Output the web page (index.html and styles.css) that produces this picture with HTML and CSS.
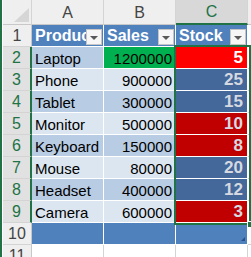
FILE: index.html
```html
<!DOCTYPE html>
<html lang="en">
<head>
<meta charset="utf-8">
<title>Inventory</title>
<link rel="stylesheet" href="styles.css">
</head>
<body>
<div class="window">
  <div class="sheet">
    <!-- column headers -->
    <div class="corner"><span class="select-all"></span></div>
    <div class="colhdr">A</div>
    <div class="colhdr">B</div>
    <div class="colhdr sel">C</div>
    <div class="colhdr last"></div>

    <!-- row 1: table header -->
    <div class="rowhdr">1</div>
    <div class="th"><span class="label">Product</span><span class="filter"></span></div>
    <div class="th"><span class="label">Sales</span><span class="filter"></span></div>
    <div class="th"><span class="label">Stock</span><span class="filter"></span></div>
    <div class="blank"></div>

    <div class="rowhdr sel">2</div>
    <div class="td odd">Laptop</div>
    <div class="td num good">1200000</div>
    <div class="td stock red">5</div>
    <div class="blank"></div>

    <div class="rowhdr sel">3</div>
    <div class="td even">Phone</div>
    <div class="td num even">900000</div>
    <div class="td stock blue">25</div>
    <div class="blank"></div>

    <div class="rowhdr sel">4</div>
    <div class="td odd">Tablet</div>
    <div class="td num odd">300000</div>
    <div class="td stock blue">15</div>
    <div class="blank"></div>

    <div class="rowhdr sel">5</div>
    <div class="td even">Monitor</div>
    <div class="td num even">500000</div>
    <div class="td stock dark">10</div>
    <div class="blank"></div>

    <div class="rowhdr sel">6</div>
    <div class="td odd">Keyboard</div>
    <div class="td num odd">150000</div>
    <div class="td stock dark">8</div>
    <div class="blank"></div>

    <div class="rowhdr sel">7</div>
    <div class="td even">Mouse</div>
    <div class="td num even">80000</div>
    <div class="td stock blue">20</div>
    <div class="blank"></div>

    <div class="rowhdr sel">8</div>
    <div class="td odd">Headset</div>
    <div class="td num odd">400000</div>
    <div class="td stock blue">12</div>
    <div class="blank"></div>

    <div class="rowhdr sel">9</div>
    <div class="td even">Camera</div>
    <div class="td num even">600000</div>
    <div class="td stock dark">3</div>
    <div class="blank"></div>

    <!-- row 10: table total band -->
    <div class="rowhdr">10</div>
    <div class="td total"></div>
    <div class="td total"></div>
    <div class="td total resize"></div>
    <div class="blank"></div>

    <div class="rowhdr">11</div>
    <div class="empty"></div>
    <div class="empty"></div>
    <div class="empty"></div>
    <div class="blank"></div>

    <!-- active range C2:C9 -->
    <div class="selection"><span class="handle"></span></div>
  </div>
</div>
</body>
</html>
```

FILE: styles.css
```css
html, body {
  margin: 0;
  padding: 0;
  background: #ffffff;
  overflow: hidden;
}

.window {
  display: flex;
  height: 257px;
  border-left: 2px solid #217346;
  padding-left: 1px;
  font-family: "Liberation Sans", Arial, sans-serif;
  font-size: 15px;
}

.sheet {
  display: grid;
  grid-template-columns: 29px 72px 72px 72px 1fr;
  grid-template-rows: 25px repeat(11, 22px);
  flex: 1;
  position: relative;
}

.sheet > div {
  box-sizing: border-box;
  min-width: 0;
}

/* column header strip */
.corner {
  background: #efefef;
  border-right: 1px solid #d4d4d4;
  border-bottom: 1px solid #c8c8c8;
  display: flex;
  justify-content: flex-end;
  align-items: flex-end;
  padding: 0 2px 2px 0;
}

.select-all {
  width: 15px;
  height: 14px;
  background: #d6d6d6;
  clip-path: polygon(100% 0, 100% 100%, 0 100%);
}

.colhdr {
  background: #efefef;
  color: #444444;
  font-size: 16px;
  border-right: 1px solid #d4d4d4;
  border-bottom: 1px solid #c8c8c8;
  display: flex;
  align-items: center;
  justify-content: center;
  padding-top: 1px;
}

.colhdr.last {
  border-right: none;
}

.colhdr.sel {
  background: #d8d8d8;
  color: #217346;
  border-bottom: 2px solid #217346;
}

/* row header strip */
.rowhdr {
  background: #efefef;
  color: #444444;
  font-size: 16px;
  border-right: 1px solid #c8c8c8;
  border-bottom: 1px solid #d4d4d4;
  display: flex;
  align-items: center;
  justify-content: center;
  padding-top: 1px;
}

.rowhdr.sel {
  background: #e1e1e1;
  color: #217346;
  border-right: 2px solid #217346;
}

/* table header row */
.th {
  background: #4f81bd;
  color: #ffffff;
  font-weight: bold;
  font-size: 16px;
  border-right: 1px solid #ffffff;
  border-bottom: 1px solid #ffffff;
  display: flex;
  align-items: center;
  padding-left: 3px;
  padding-right: 1px;
}

.th .label {
  flex: 1;
  overflow: hidden;
  white-space: nowrap;
  padding-top: 1px;
}

.filter {
  flex: none;
  width: 16px;
  height: 16px;
  box-sizing: border-box;
  background: #f6f6f6;
  border: 1px solid #c6c6c6;
  display: flex;
  align-items: center;
  justify-content: center;
  margin-top: 2px;
}

.filter::before {
  content: "";
  width: 0;
  height: 0;
  border-left: 4px solid transparent;
  border-right: 4px solid transparent;
  border-top: 4px solid #595959;
  margin-top: 2px;
}

/* table body */
.td {
  color: #000000;
  border-right: 1px solid #ffffff;
  border-bottom: 1px solid #ffffff;
  display: flex;
  align-items: center;
  padding: 1px 3px 0 3px;
  white-space: nowrap;
  overflow: hidden;
}

.odd { background: #b8cce4; }
.even { background: #dce6f1; }

.num { justify-content: flex-end; }

.good { background: #00b050; }

.stock {
  justify-content: flex-end;
  font-weight: bold;
  font-size: 17px;
  color: #d6d9e0;
  padding-right: 4px;
}

.red { background: #ff0000; color: #ffffff; }
.dark { background: #c00000; }
.blue { background: #44689a; }

.total { background: #4f81bd; }

.resize { position: relative; }

.resize::after {
  content: "";
  position: absolute;
  right: 2px;
  bottom: 3px;
  width: 4px;
  height: 4px;
  background: #2c4f8c;
  clip-path: polygon(100% 0, 100% 100%, 0 100%);
}

/* plain cells outside the table */
.empty {
  border-right: 1px solid #d4d4d4;
  border-bottom: 1px solid #d4d4d4;
}

.blank {
  border-bottom: 1px solid #d4d4d4;
}

/* active range outline, laid over C2:C9 */
.selection {
  position: absolute;
  grid-column: 4;
  grid-row: 3 / 11;
  top: -2px;
  bottom: -2px;
  left: -2px;
  right: 0;
  border: 2px solid #217346;
  pointer-events: none;
}

.handle {
  position: absolute;
  right: -5px;
  bottom: -5px;
  width: 5px;
  height: 5px;
  background: #217346;
  border: 1px solid #ffffff;
}
```
